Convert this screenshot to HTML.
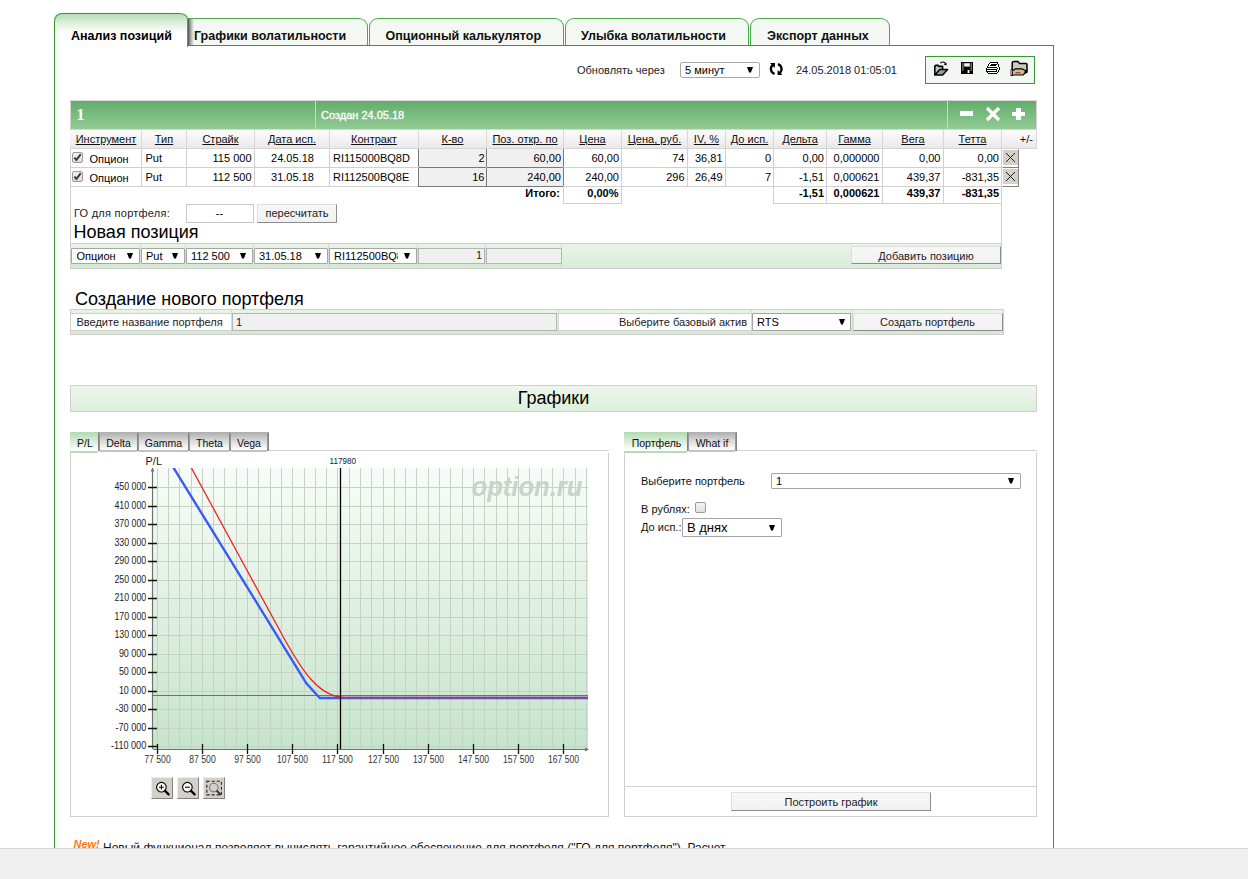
<!DOCTYPE html>
<html><head><meta charset="utf-8"><title>Анализ позиций</title>
<style>
html,body{margin:0;padding:0;background:#fff;}
body{width:1248px;height:879px;overflow:hidden;position:relative;font-family:"Liberation Sans",sans-serif;}
.t{position:absolute;white-space:nowrap;line-height:normal;}
.r{position:absolute;}
</style></head><body>
<div class="r" style="left:187px;top:18px;width:179px;height:27px;border:1px solid #4aa94a;border-bottom:none;border-radius:0 9px 0 0;background:#f3f8f2;"></div>
<div class="t" style="left:194px;top:29px;font: bold 12.5px 'Liberation Sans',sans-serif;color:#111;">Графики волатильности</div>
<div class="r" style="left:369px;top:18px;width:193px;height:27px;border:1px solid #4aa94a;border-bottom:none;border-radius:9px 9px 0 0;background:#f3f8f2;"></div>
<div class="t" style="left:385.5px;top:29px;font: bold 12.5px 'Liberation Sans',sans-serif;color:#111;">Опционный калькулятор</div>
<div class="r" style="left:565px;top:18px;width:182px;height:27px;border:1px solid #4aa94a;border-bottom:none;border-radius:9px 9px 0 0;background:#f3f8f2;"></div>
<div class="t" style="left:581px;top:29px;font: bold 12.5px 'Liberation Sans',sans-serif;color:#111;">Улыбка волатильности</div>
<div class="r" style="left:750px;top:18px;width:138px;height:27px;border:1px solid #4aa94a;border-bottom:none;border-radius:9px 9px 0 0;background:#f3f8f2;"></div>
<div class="t" style="left:767px;top:29px;font: bold 12.5px 'Liberation Sans',sans-serif;color:#111;">Экспорт данных</div>
<div class="r" style="left:54px;top:45px;width:998px;height:900px;border:1px solid #339933;background:#fff;"></div>
<div class="r" style="left:54px;top:13px;width:132px;height:33px;border:1px solid #339933;border-bottom:none;border-radius:8px 8px 0 0 / 8px 6px 0 0;background:linear-gradient(#b3dbb3 0px,#d8eed8 8px,#fff 19px,#fff);"></div>
<div class="r" style="left:187px;top:18px;width:1px;height:27px;background:#4aa94a;"></div>
<div class="r" style="left:188px;top:19px;width:6px;height:26px;background:linear-gradient(90deg,#4a4a4a 0,#9a9a9a 35%,rgba(243,248,242,0) 100%);"></div>
<div class="t" style="left:71px;top:29px;font: bold 12.5px 'Liberation Sans',sans-serif;color:#000;">Анализ позиций</div>
<div class="t" style="left:577px;top:64px;font: normal 11px 'Liberation Sans',sans-serif;color:#222;">Обновлять через</div>
<div class="r" style="left:680px;top:62px;width:78px;height:14px;border:1px solid #a9a9a9;border-radius:2px;background:#fff;"></div>
<div class="t" style="left:685px;top:64px;font: normal 11px 'Liberation Sans',sans-serif;color:#000;">5 минут</div>
<svg class="r" style="left:747px;top:67.3px" width="7" height="7" viewBox="0 0 7 7"><path d="M0 0 H6 L3.9 5.6 H2.1 Z" fill="#000"/></svg>
<svg class="r" style="left:764px;top:58px" width="24" height="22" viewBox="0 0 24 22"><path d="M9.6 6.6 C7.3 8 6.6 10 7 12 C7.4 14 8.8 15.3 10.6 15.9" fill="none" stroke="#000" stroke-width="2.3"/><path d="M6 5.1 L11 5.1 L10.8 9.9 Z" fill="#000"/><path d="M14.9 15.4 C17.2 14 17.9 12 17.5 10 C17.1 8 15.7 6.7 13.9 6.1" fill="none" stroke="#000" stroke-width="2.3"/><path d="M18.5 16.9 L13.5 16.9 L13.7 12.1 Z" fill="#000"/></svg>
<div class="t" style="left:796px;top:64px;font: normal 11px 'Liberation Sans',sans-serif;color:#222;">24.05.2018 01:05:01</div>
<div class="r" style="left:925px;top:56px;width:108px;height:26px;border:1px solid #339933;background:#f3f7f2;"></div>
<svg class="r" style="left:928px;top:58px" width="106" height="24" viewBox="0 0 106 24">
<g stroke="#000" stroke-linejoin="round">
<path d="M6.8 17 V8.6 Q6.8 7.4 8 7.4 H10.4 L11.2 8.4 H14.6 V11.5" fill="#c4c4c8" stroke-width="1.6"/>
<path d="M6.8 17 L11.8 11.6 H19.6 L14.6 17 Z" fill="#9a9a9a" stroke-width="1.5"/>
<path d="M12.3 5.2 Q15 2.6 17.8 5.6" fill="none" stroke-width="1.1"/>
<path d="M15.6 6.6 L18.6 7.6 L18.4 4.4 Z" fill="#000" stroke="none"/>
</g>
<rect x="33" y="4" width="12" height="12" fill="#000"/>
<rect x="34.3" y="5" width="1.2" height="8" fill="#888"/><rect x="42.6" y="5" width="1.2" height="8" fill="#888"/>
<rect x="36.2" y="5.2" width="5.6" height="3.4" fill="#f4f2ea"/>
<rect x="39.6" y="12" width="1.8" height="3" fill="#fff"/>
<g shape-rendering="crispEdges"><rect x="59" y="5" width="10" height="10" fill="#fff"/><rect x="62" y="4" width="8" height="1" fill="#000"/><rect x="61" y="5" width="1" height="1" fill="#000"/><rect x="69" y="5" width="1" height="1" fill="#000"/><rect x="60" y="6" width="1" height="1" fill="#000"/><rect x="63" y="6" width="6" height="1" fill="#000"/><rect x="70" y="6" width="1" height="1" fill="#000"/><rect x="60" y="7" width="1" height="1" fill="#000"/><rect x="62" y="7" width="6" height="1" fill="#000"/><rect x="70" y="7" width="1" height="1" fill="#000"/><rect x="59" y="8" width="1" height="1" fill="#000"/><rect x="70" y="8" width="1" height="1" fill="#000"/><rect x="59" y="9" width="10" height="1" fill="#000"/><rect x="71" y="9" width="1" height="1" fill="#000"/><rect x="58" y="10" width="1" height="1" fill="#000"/><rect x="69" y="10" width="1" height="1" fill="#000"/><rect x="71" y="10" width="1" height="1" fill="#000"/><rect x="58" y="11" width="11" height="1" fill="#000"/><rect x="71" y="11" width="1" height="1" fill="#000"/><rect x="58" y="12" width="1" height="1" fill="#000"/><rect x="68" y="12" width="1" height="1" fill="#000"/><rect x="70" y="12" width="1" height="1" fill="#000"/><rect x="58" y="13" width="11" height="1" fill="#000"/><rect x="70" y="13" width="1" height="1" fill="#000"/><rect x="59" y="14" width="1" height="1" fill="#000"/><rect x="69" y="14" width="1" height="1" fill="#000"/><rect x="60" y="15" width="9" height="1" fill="#000"/></g>
<path d="M84.2 17.4 V5.4 Q84.2 3.6 86 3.6 H90 L91.6 5.6 H98 Q99 5.6 99 6.8 V14 L96 15.5" fill="#c8ccb4" stroke="#000" stroke-width="1.5"/>
<path d="M84 11.8 h2.2 l1 -1 h6.5 q2.2 0.3 3.2 2 l1.5 -0.6 q-1 2.6 -3.3 4.8 h-11 z" fill="#d8b696" stroke="#000" stroke-width="1.2"/>
<path d="M87.6 14.8 h5" stroke="#5a3a20" stroke-width="1"/>
<rect x="83" y="11.6" width="1.6" height="6" fill="#fff" stroke="#000" stroke-width="0.8"/>
</svg>
<div class="r" style="left:70px;top:100px;width:967px;height:1px;background:#d6d6d6;"></div>
<div class="r" style="left:70px;top:101px;width:967px;height:28px;background:linear-gradient(#62ac6c,#92cb94);"></div>
<div class="r" style="left:315px;top:101px;width:1px;height:28px;background:#c7d9c7;"></div>
<div class="r" style="left:70px;top:100px;width:1px;height:29px;background:#d6d0d2;"></div>
<div class="r" style="left:1036px;top:100px;width:1px;height:29px;background:#d6d0d2;"></div>
<div class="r" style="left:947px;top:101px;width:1px;height:28px;background:#c7d9c7;"></div>
<div class="t" style="left:76.5px;top:106px;font: bold 16px 'Liberation Serif',serif;color:#fff;">1</div>
<div class="t" style="left:321px;top:109px;font: normal 11px 'Liberation Sans',sans-serif;color:#fff;-webkit-text-stroke:0.3px #fff;">Создан 24.05.18</div>
<div class="r" style="left:960px;top:111px;width:13px;height:5px;background:#fff;"></div>
<svg class="r" style="left:985px;top:106px" width="16" height="16" viewBox="0 0 16 16"><path d="M2 2 L14 14 M14 2 L2 14" stroke="#fff" stroke-width="3.2"/></svg>
<div class="r" style="left:1012px;top:112px;width:13px;height:4px;background:#fff;"></div>
<div class="r" style="left:1016px;top:108px;width:5px;height:12px;background:#fff;"></div>
<div class="r" style="left:70px;top:129px;width:967px;height:19px;background:linear-gradient(#fdfdfd,#e9e9e9);border-bottom:1px solid #d4d4d4;"></div>
<div class="r" style="left:70px;top:129px;width:967px;height:1px;background:#ddd6d9;"></div>
<div class="r" style="left:141px;top:129px;width:1px;height:19px;background:#d8d8d8;"></div>
<div class="r" style="left:186px;top:129px;width:1px;height:19px;background:#d8d8d8;"></div>
<div class="r" style="left:254px;top:129px;width:1px;height:19px;background:#d8d8d8;"></div>
<div class="r" style="left:329px;top:129px;width:1px;height:19px;background:#d8d8d8;"></div>
<div class="r" style="left:418px;top:129px;width:1px;height:19px;background:#d8d8d8;"></div>
<div class="r" style="left:486px;top:129px;width:1px;height:19px;background:#d8d8d8;"></div>
<div class="r" style="left:563px;top:129px;width:1px;height:19px;background:#d8d8d8;"></div>
<div class="r" style="left:621px;top:129px;width:1px;height:19px;background:#d8d8d8;"></div>
<div class="r" style="left:687px;top:129px;width:1px;height:19px;background:#d8d8d8;"></div>
<div class="r" style="left:725px;top:129px;width:1px;height:19px;background:#d8d8d8;"></div>
<div class="r" style="left:773px;top:129px;width:1px;height:19px;background:#d8d8d8;"></div>
<div class="r" style="left:826px;top:129px;width:1px;height:19px;background:#d8d8d8;"></div>
<div class="r" style="left:882px;top:129px;width:1px;height:19px;background:#d8d8d8;"></div>
<div class="r" style="left:943px;top:129px;width:1px;height:19px;background:#d8d8d8;"></div>
<div class="r" style="left:1001px;top:129px;width:1px;height:19px;background:#d8d8d8;"></div>
<div class="r" style="left:1036px;top:129px;width:1px;height:19px;background:#d8d8d8;"></div>
<div class="t" style="left:-94.0px;width:400px;top:133px;font: normal 11px 'Liberation Sans',sans-serif;color:#111;text-align:center;text-decoration:underline;">Инструмент</div>
<div class="t" style="left:-36.0px;width:400px;top:133px;font: normal 11px 'Liberation Sans',sans-serif;color:#111;text-align:center;text-decoration:underline;">Тип</div>
<div class="t" style="left:20.5px;width:400px;top:133px;font: normal 11px 'Liberation Sans',sans-serif;color:#111;text-align:center;text-decoration:underline;">Страйк</div>
<div class="t" style="left:92.0px;width:400px;top:133px;font: normal 11px 'Liberation Sans',sans-serif;color:#111;text-align:center;text-decoration:underline;">Дата исп.</div>
<div class="t" style="left:174.0px;width:400px;top:133px;font: normal 11px 'Liberation Sans',sans-serif;color:#111;text-align:center;text-decoration:underline;">Контракт</div>
<div class="t" style="left:252.5px;width:400px;top:133px;font: normal 11px 'Liberation Sans',sans-serif;color:#111;text-align:center;text-decoration:underline;">К-во</div>
<div class="t" style="left:325.0px;width:400px;top:133px;font: normal 11px 'Liberation Sans',sans-serif;color:#111;text-align:center;text-decoration:underline;">Поз. откр. по</div>
<div class="t" style="left:392.5px;width:400px;top:133px;font: normal 11px 'Liberation Sans',sans-serif;color:#111;text-align:center;text-decoration:underline;">Цена</div>
<div class="t" style="left:454.5px;width:400px;top:133px;font: normal 11px 'Liberation Sans',sans-serif;color:#111;text-align:center;text-decoration:underline;">Цена, руб.</div>
<div class="t" style="left:506.5px;width:400px;top:133px;font: normal 11px 'Liberation Sans',sans-serif;color:#111;text-align:center;text-decoration:underline;">IV, %</div>
<div class="t" style="left:549.5px;width:400px;top:133px;font: normal 11px 'Liberation Sans',sans-serif;color:#111;text-align:center;text-decoration:underline;">До исп.</div>
<div class="t" style="left:600.0px;width:400px;top:133px;font: normal 11px 'Liberation Sans',sans-serif;color:#111;text-align:center;text-decoration:underline;">Дельта</div>
<div class="t" style="left:654.5px;width:400px;top:133px;font: normal 11px 'Liberation Sans',sans-serif;color:#111;text-align:center;text-decoration:underline;">Гамма</div>
<div class="t" style="left:713.0px;width:400px;top:133px;font: normal 11px 'Liberation Sans',sans-serif;color:#111;text-align:center;text-decoration:underline;">Вега</div>
<div class="t" style="left:772.5px;width:400px;top:133px;font: normal 11px 'Liberation Sans',sans-serif;color:#111;text-align:center;text-decoration:underline;">Тетта</div>
<div class="t" style="right:215px;top:133px;font: normal 11px 'Liberation Sans',sans-serif;color:#111;text-align:right;">+/-</div>
<div class="r" style="left:70px;top:148px;width:1px;height:120px;background:#d0d0d0;"></div>
<div class="r" style="left:70px;top:167px;width:931px;height:1px;background:#d0d0d0;"></div>
<div class="r" style="left:141px;top:148px;width:1px;height:19px;background:#d0d0d0;"></div>
<div class="r" style="left:186px;top:148px;width:1px;height:19px;background:#d0d0d0;"></div>
<div class="r" style="left:254px;top:148px;width:1px;height:19px;background:#d0d0d0;"></div>
<div class="r" style="left:329px;top:148px;width:1px;height:19px;background:#d0d0d0;"></div>
<div class="r" style="left:418px;top:148px;width:1px;height:19px;background:#d0d0d0;"></div>
<div class="r" style="left:486px;top:148px;width:1px;height:19px;background:#d0d0d0;"></div>
<div class="r" style="left:563px;top:148px;width:1px;height:19px;background:#d0d0d0;"></div>
<div class="r" style="left:621px;top:148px;width:1px;height:19px;background:#d0d0d0;"></div>
<div class="r" style="left:687px;top:148px;width:1px;height:19px;background:#d0d0d0;"></div>
<div class="r" style="left:725px;top:148px;width:1px;height:19px;background:#d0d0d0;"></div>
<div class="r" style="left:773px;top:148px;width:1px;height:19px;background:#d0d0d0;"></div>
<div class="r" style="left:826px;top:148px;width:1px;height:19px;background:#d0d0d0;"></div>
<div class="r" style="left:882px;top:148px;width:1px;height:19px;background:#d0d0d0;"></div>
<div class="r" style="left:943px;top:148px;width:1px;height:19px;background:#d0d0d0;"></div>
<div class="r" style="left:1001px;top:148px;width:1px;height:19px;background:#d0d0d0;"></div>
<div class="r" style="left:419px;top:149px;width:144px;height:18px;background:#f0f0f0;"></div>
<div class="r" style="left:418px;top:149px;width:1px;height:19px;background:#7a7a7a;"></div>
<div class="r" style="left:486px;top:149px;width:1px;height:19px;background:#7a7a7a;"></div>
<div class="r" style="left:563px;top:149px;width:1px;height:19px;background:#7a7a7a;"></div>
<div class="r" style="left:418px;top:167px;width:146px;height:1px;background:#7a7a7a;"></div>
<div class="r" style="left:72px;top:152px;width:11px;height:11px;border:1px solid #9a9a9a;border-radius:2px;background:linear-gradient(#f2f2f2,#dcdcdc);box-sizing:border-box;"></div>
<svg class="r" style="left:72px;top:152px" width="11" height="11" viewBox="0 0 11 11"><path d="M2.4 5.6 L4.4 8 L8.8 2.2" fill="none" stroke="#3a3a3a" stroke-width="2"/></svg>
<div class="t" style="left:89.5px;top:153px;font: normal 11px 'Liberation Sans',sans-serif;color:#000;">Опцион</div>
<div class="t" style="left:145.5px;top:152px;font: normal 11px 'Liberation Sans',sans-serif;color:#000;">Put</div>
<div class="t" style="right:996.5px;top:152px;font: normal 11px 'Liberation Sans',sans-serif;color:#000;text-align:right;">115 000</div>
<div class="t" style="left:92.5px;width:400px;top:152px;font: normal 11px 'Liberation Sans',sans-serif;color:#000;text-align:center;">24.05.18</div>
<div class="t" style="left:333px;top:152px;font: normal 11px 'Liberation Sans',sans-serif;color:#000;">RI115000BQ8D</div>
<div class="t" style="right:763.5px;top:152px;font: normal 11px 'Liberation Sans',sans-serif;color:#000;text-align:right;">2</div>
<div class="t" style="right:687px;top:152px;font: normal 11px 'Liberation Sans',sans-serif;color:#000;text-align:right;">60,00</div>
<div class="t" style="right:629px;top:152px;font: normal 11px 'Liberation Sans',sans-serif;color:#000;text-align:right;">60,00</div>
<div class="t" style="right:563.5px;top:152px;font: normal 11px 'Liberation Sans',sans-serif;color:#000;text-align:right;">74</div>
<div class="t" style="right:525.5px;top:152px;font: normal 11px 'Liberation Sans',sans-serif;color:#000;text-align:right;">36,81</div>
<div class="t" style="right:477px;top:152px;font: normal 11px 'Liberation Sans',sans-serif;color:#000;text-align:right;">0</div>
<div class="t" style="right:424px;top:152px;font: normal 11px 'Liberation Sans',sans-serif;color:#000;text-align:right;">0,00</div>
<div class="t" style="right:368.5px;top:152px;font: normal 11px 'Liberation Sans',sans-serif;color:#000;text-align:right;">0,000000</div>
<div class="t" style="right:307.5px;top:152px;font: normal 11px 'Liberation Sans',sans-serif;color:#000;text-align:right;">0,00</div>
<div class="t" style="right:249px;top:152px;font: normal 11px 'Liberation Sans',sans-serif;color:#000;text-align:right;">0,00</div>
<div class="r" style="left:1002px;top:149px;width:17px;height:19px;background:#d4d0c8;border:1px solid;border-color:#fff #808080 #808080 #fff;box-shadow:inset 0 -2px 0 #fff;box-sizing:border-box;"></div>
<svg class="r" style="left:1005px;top:152px" width="11" height="11" viewBox="0 0 11 11"><path d="M1 1 L10 10 M10 1 L1 10" stroke="#222" stroke-width="1"/></svg>
<div class="r" style="left:70px;top:186px;width:931px;height:1px;background:#d0d0d0;"></div>
<div class="r" style="left:141px;top:167px;width:1px;height:19px;background:#d0d0d0;"></div>
<div class="r" style="left:186px;top:167px;width:1px;height:19px;background:#d0d0d0;"></div>
<div class="r" style="left:254px;top:167px;width:1px;height:19px;background:#d0d0d0;"></div>
<div class="r" style="left:329px;top:167px;width:1px;height:19px;background:#d0d0d0;"></div>
<div class="r" style="left:418px;top:167px;width:1px;height:19px;background:#d0d0d0;"></div>
<div class="r" style="left:486px;top:167px;width:1px;height:19px;background:#d0d0d0;"></div>
<div class="r" style="left:563px;top:167px;width:1px;height:19px;background:#d0d0d0;"></div>
<div class="r" style="left:621px;top:167px;width:1px;height:19px;background:#d0d0d0;"></div>
<div class="r" style="left:687px;top:167px;width:1px;height:19px;background:#d0d0d0;"></div>
<div class="r" style="left:725px;top:167px;width:1px;height:19px;background:#d0d0d0;"></div>
<div class="r" style="left:773px;top:167px;width:1px;height:19px;background:#d0d0d0;"></div>
<div class="r" style="left:826px;top:167px;width:1px;height:19px;background:#d0d0d0;"></div>
<div class="r" style="left:882px;top:167px;width:1px;height:19px;background:#d0d0d0;"></div>
<div class="r" style="left:943px;top:167px;width:1px;height:19px;background:#d0d0d0;"></div>
<div class="r" style="left:1001px;top:167px;width:1px;height:19px;background:#d0d0d0;"></div>
<div class="r" style="left:419px;top:168px;width:144px;height:18px;background:#f0f0f0;"></div>
<div class="r" style="left:418px;top:168px;width:1px;height:19px;background:#7a7a7a;"></div>
<div class="r" style="left:486px;top:168px;width:1px;height:19px;background:#7a7a7a;"></div>
<div class="r" style="left:563px;top:168px;width:1px;height:19px;background:#7a7a7a;"></div>
<div class="r" style="left:418px;top:186px;width:146px;height:1px;background:#7a7a7a;"></div>
<div class="r" style="left:72px;top:171px;width:11px;height:11px;border:1px solid #9a9a9a;border-radius:2px;background:linear-gradient(#f2f2f2,#dcdcdc);box-sizing:border-box;"></div>
<svg class="r" style="left:72px;top:171px" width="11" height="11" viewBox="0 0 11 11"><path d="M2.4 5.6 L4.4 8 L8.8 2.2" fill="none" stroke="#3a3a3a" stroke-width="2"/></svg>
<div class="t" style="left:89.5px;top:172px;font: normal 11px 'Liberation Sans',sans-serif;color:#000;">Опцион</div>
<div class="t" style="left:145.5px;top:171px;font: normal 11px 'Liberation Sans',sans-serif;color:#000;">Put</div>
<div class="t" style="right:996.5px;top:171px;font: normal 11px 'Liberation Sans',sans-serif;color:#000;text-align:right;">112 500</div>
<div class="t" style="left:92.5px;width:400px;top:171px;font: normal 11px 'Liberation Sans',sans-serif;color:#000;text-align:center;">31.05.18</div>
<div class="t" style="left:333px;top:171px;font: normal 11px 'Liberation Sans',sans-serif;color:#000;">RI112500BQ8E</div>
<div class="t" style="right:763.5px;top:171px;font: normal 11px 'Liberation Sans',sans-serif;color:#000;text-align:right;">16</div>
<div class="t" style="right:687px;top:171px;font: normal 11px 'Liberation Sans',sans-serif;color:#000;text-align:right;">240,00</div>
<div class="t" style="right:629px;top:171px;font: normal 11px 'Liberation Sans',sans-serif;color:#000;text-align:right;">240,00</div>
<div class="t" style="right:563.5px;top:171px;font: normal 11px 'Liberation Sans',sans-serif;color:#000;text-align:right;">296</div>
<div class="t" style="right:525.5px;top:171px;font: normal 11px 'Liberation Sans',sans-serif;color:#000;text-align:right;">26,49</div>
<div class="t" style="right:477px;top:171px;font: normal 11px 'Liberation Sans',sans-serif;color:#000;text-align:right;">7</div>
<div class="t" style="right:424px;top:171px;font: normal 11px 'Liberation Sans',sans-serif;color:#000;text-align:right;">-1,51</div>
<div class="t" style="right:368.5px;top:171px;font: normal 11px 'Liberation Sans',sans-serif;color:#000;text-align:right;">0,000621</div>
<div class="t" style="right:307.5px;top:171px;font: normal 11px 'Liberation Sans',sans-serif;color:#000;text-align:right;">439,37</div>
<div class="t" style="right:249px;top:171px;font: normal 11px 'Liberation Sans',sans-serif;color:#000;text-align:right;">-831,35</div>
<div class="r" style="left:1002px;top:168px;width:17px;height:19px;background:#d4d0c8;border:1px solid;border-color:#fff #808080 #808080 #fff;box-shadow:inset 0 -2px 0 #fff;box-sizing:border-box;"></div>
<svg class="r" style="left:1005px;top:171px" width="11" height="11" viewBox="0 0 11 11"><path d="M1 1 L10 10 M10 1 L1 10" stroke="#222" stroke-width="1"/></svg>
<div class="r" style="left:563px;top:186px;width:1px;height:17px;background:#d0d0d0;"></div>
<div class="r" style="left:621px;top:186px;width:1px;height:17px;background:#d0d0d0;"></div>
<div class="r" style="left:563px;top:203px;width:59px;height:1px;background:#d0d0d0;"></div>
<div class="r" style="left:773px;top:186px;width:1px;height:17px;background:#d0d0d0;"></div>
<div class="r" style="left:826px;top:186px;width:1px;height:17px;background:#d0d0d0;"></div>
<div class="r" style="left:882px;top:186px;width:1px;height:17px;background:#d0d0d0;"></div>
<div class="r" style="left:943px;top:186px;width:1px;height:17px;background:#d0d0d0;"></div>
<div class="r" style="left:1001px;top:186px;width:1px;height:17px;background:#d0d0d0;"></div>
<div class="r" style="left:773px;top:203px;width:229px;height:1px;background:#d0d0d0;"></div>
<div class="r" style="left:1001px;top:203px;width:1px;height:65px;background:#d0d0d0;"></div>
<div class="t" style="right:688px;top:187px;font: bold 11px 'Liberation Sans',sans-serif;color:#000;text-align:right;">Итого:</div>
<div class="t" style="right:629.5px;top:187px;font: bold 11px 'Liberation Sans',sans-serif;color:#000;text-align:right;">0,00%</div>
<div class="t" style="right:424px;top:187px;font: bold 11px 'Liberation Sans',sans-serif;color:#000;text-align:right;">-1,51</div>
<div class="t" style="right:368.5px;top:187px;font: bold 11px 'Liberation Sans',sans-serif;color:#000;text-align:right;">0,000621</div>
<div class="t" style="right:307.5px;top:187px;font: bold 11px 'Liberation Sans',sans-serif;color:#000;text-align:right;">439,37</div>
<div class="t" style="right:249px;top:187px;font: bold 11px 'Liberation Sans',sans-serif;color:#000;text-align:right;">-831,35</div>
<div class="t" style="left:74px;top:207px;font: normal 11px 'Liberation Sans',sans-serif;color:#222;letter-spacing:0.25px;">ГО для портфеля:</div>
<div class="r" style="left:186px;top:204px;width:66px;height:17px;border:1px solid #c8c8c8;background:#fff;"></div>
<div class="t" style="left:19.5px;width:400px;top:207px;font: normal 11px 'Liberation Sans',sans-serif;color:#000;text-align:center;">--</div>
<div class="r" style="left:257px;top:204px;width:80px;height:19px;border:1px solid #dedede;border-right-color:#8c8c8c;border-bottom-color:#8c8c8c;background:linear-gradient(#f7f7f7,#f1f1f1);box-sizing:border-box;"></div>
<div class="t" style="left:97px;width:400px;top:207px;font: normal 11px 'Liberation Sans',sans-serif;color:#222;text-align:center;">пересчитать</div>
<div class="t" style="left:73.5px;top:222px;font: normal 18px 'Liberation Sans',sans-serif;color:#000;">Новая позиция</div>
<div class="r" style="left:70px;top:243px;width:932px;height:26px;background:linear-gradient(#e9f4e7,#d4e9d2);border-top:1px solid #cfcfcf;border-bottom:1px solid #cfcfcf;box-sizing:border-box;"></div>
<div class="r" style="left:562px;top:244px;width:439px;height:24px;background:linear-gradient(#e9f4e8,#d9ecd9);"></div>
<div class="r" style="left:70px;top:243px;width:1px;height:26px;background:#cfcfcf;"></div>
<div class="r" style="left:1001px;top:243px;width:1px;height:26px;background:#cfcfcf;"></div>
<div class="r" style="left:140px;top:244px;width:1px;height:24px;background:#d2dcd2;"></div>
<div class="r" style="left:185px;top:244px;width:1px;height:24px;background:#d2dcd2;"></div>
<div class="r" style="left:253px;top:244px;width:1px;height:24px;background:#d2dcd2;"></div>
<div class="r" style="left:328px;top:244px;width:1px;height:24px;background:#d2dcd2;"></div>
<div class="r" style="left:417px;top:244px;width:1px;height:24px;background:#d2dcd2;"></div>
<div class="r" style="left:485px;top:244px;width:1px;height:24px;background:#d2dcd2;"></div>
<div class="r" style="left:561px;top:244px;width:1px;height:24px;background:#d2dcd2;"></div>
<div class="r" style="left:71px;top:248px;width:69px;height:16px;border:1px solid #a6a6a6;background:#fff;box-sizing:border-box;border-radius:1px;"></div>
<div class="t" style="left:76.5px;top:250px;font: normal 11px 'Liberation Sans',sans-serif;color:#000;">Опцион</div>
<svg class="r" style="left:127px;top:253px" width="7" height="7" viewBox="0 0 7 7"><path d="M0 0 H6 L3.9 5.6 H2.1 Z" fill="#000"/></svg>
<div class="r" style="left:141px;top:248px;width:44px;height:16px;border:1px solid #a6a6a6;background:#fff;box-sizing:border-box;border-radius:1px;"></div>
<div class="t" style="left:146px;top:250px;font: normal 11px 'Liberation Sans',sans-serif;color:#000;">Put</div>
<svg class="r" style="left:172px;top:253px" width="7" height="7" viewBox="0 0 7 7"><path d="M0 0 H6 L3.9 5.6 H2.1 Z" fill="#000"/></svg>
<div class="r" style="left:186px;top:248px;width:67px;height:16px;border:1px solid #a6a6a6;background:#fff;box-sizing:border-box;border-radius:1px;"></div>
<div class="t" style="left:191px;top:250px;font: normal 11px 'Liberation Sans',sans-serif;color:#000;">112 500</div>
<svg class="r" style="left:240px;top:253px" width="7" height="7" viewBox="0 0 7 7"><path d="M0 0 H6 L3.9 5.6 H2.1 Z" fill="#000"/></svg>
<div class="r" style="left:254px;top:248px;width:74px;height:16px;border:1px solid #a6a6a6;background:#fff;box-sizing:border-box;border-radius:1px;"></div>
<div class="t" style="left:259px;top:250px;font: normal 11px 'Liberation Sans',sans-serif;color:#000;">31.05.18</div>
<svg class="r" style="left:315px;top:253px" width="7" height="7" viewBox="0 0 7 7"><path d="M0 0 H6 L3.9 5.6 H2.1 Z" fill="#000"/></svg>
<div class="r" style="left:329px;top:248px;width:88px;height:16px;overflow:hidden;border:1px solid #a6a6a6;box-sizing:border-box;background:#fff;"></div>
<div class="t" style="left:334px;top:250px;width:64px;overflow:hidden;font:11px 'Liberation Sans';white-space:nowrap">RI112500BQ8E</div>
<svg class="r" style="left:404px;top:252.6px" width="7" height="7" viewBox="0 0 7 7"><path d="M0 0 H6 L3.9 5.6 H2.1 Z" fill="#000"/></svg>
<div class="r" style="left:418px;top:248px;width:67px;height:16px;border:1px solid #b5b5b5;background:#f0f0f0;box-sizing:border-box;"></div>
<div class="t" style="right:766px;top:249px;font: normal 11px 'Liberation Sans',sans-serif;color:#222;text-align:right;">1</div>
<div class="r" style="left:486px;top:248px;width:76px;height:16px;border:1px solid #b5b5b5;background:#f0f0f0;box-sizing:border-box;"></div>
<div class="r" style="left:851px;top:246px;width:150px;height:18px;border:1px solid #dedede;border-right-color:#8c8c8c;border-bottom-color:#8c8c8c;background:linear-gradient(#f7f7f7,#f1f1f1);box-sizing:border-box;"></div>
<div class="t" style="left:726px;width:400px;top:249.5px;font: normal 11px 'Liberation Sans',sans-serif;color:#222;text-align:center;">Добавить позицию</div>
<div class="t" style="left:75px;top:289px;font: normal 18px 'Liberation Sans',sans-serif;color:#000;">Создание нового портфеля</div>
<div class="r" style="left:70px;top:309px;width:934px;height:26px;background:linear-gradient(#e9f4e7,#d4e9d2);border-top:1px solid #cfcfcf;border-bottom:1px solid #cfcfcf;box-sizing:border-box;"></div>
<div class="r" style="left:70px;top:309px;width:1px;height:26px;background:#cfcfcf;"></div>
<div class="r" style="left:1003px;top:309px;width:1px;height:26px;background:#cfcfcf;"></div>
<div class="r" style="left:71px;top:313px;width:931px;height:1px;background:#d0d0d0;"></div>
<div class="r" style="left:71px;top:330px;width:931px;height:1px;background:#d0d0d0;"></div>
<div class="r" style="left:71px;top:314px;width:160px;height:16px;background:#fff;"></div>
<div class="r" style="left:231px;top:310px;width:1px;height:24px;background:#d2dcd2;"></div>
<div class="r" style="left:232px;top:313px;width:325px;height:18px;background:#f0f0f0;border:1px solid #b5b5b5;box-sizing:border-box;"></div>
<div class="r" style="left:558px;top:310px;width:1px;height:24px;background:#d2dcd2;"></div>
<div class="r" style="left:559px;top:314px;width:192px;height:16px;background:#fff;"></div>
<div class="r" style="left:751px;top:310px;width:1px;height:24px;background:#d2dcd2;"></div>
<div class="r" style="left:852px;top:310px;width:1px;height:24px;background:#d2dcd2;"></div>
<div class="t" style="left:76.5px;top:316px;font: normal 11px 'Liberation Sans',sans-serif;color:#222;">Введите название портфеля</div>
<div class="t" style="left:236px;top:316px;font: normal 11px 'Liberation Sans',sans-serif;color:#222;">1</div>
<div class="t" style="right:501px;top:316px;font: normal 11px 'Liberation Sans',sans-serif;color:#222;text-align:right;">Выберите базовый актив</div>
<div class="r" style="left:752px;top:313px;width:99px;height:18px;border:1px solid #a6a6a6;background:#fff;box-sizing:border-box;border-radius:1px;"></div>
<div class="t" style="left:757px;top:316px;font: normal 11px 'Liberation Sans',sans-serif;color:#000;">RTS</div>
<svg class="r" style="left:839px;top:319px" width="7" height="7" viewBox="0 0 7 7"><path d="M0 0 H6 L3.9 5.6 H2.1 Z" fill="#000"/></svg>
<div class="r" style="left:853px;top:313px;width:150px;height:18px;border:1px solid #dedede;border-right-color:#8c8c8c;border-bottom-color:#8c8c8c;background:linear-gradient(#f7f7f7,#f1f1f1);box-sizing:border-box;"></div>
<div class="t" style="left:727.5px;width:400px;top:316px;font: normal 11px 'Liberation Sans',sans-serif;color:#222;text-align:center;">Создать портфель</div>
<div class="r" style="left:70px;top:385px;width:967px;height:27px;border:1px solid #cfcfcf;background:linear-gradient(#eef6ee,#dcefdc);box-sizing:border-box;"></div>
<div class="t" style="left:353.5px;width:400px;top:388px;font: normal 18px 'Liberation Sans',sans-serif;color:#000;text-align:center;">Графики</div>
<div class="r" style="left:269px;top:450px;width:340px;height:1px;background:#d0d0d0;"></div>
<div class="r" style="left:70px;top:432px;width:28px;height:19px;background:linear-gradient(#b2dab2,#f4faf4 85%,#fff);"></div>
<div class="r" style="left:70px;top:451px;width:28px;height:2px;background:#b5dcb5;"></div>
<div class="t" style="left:-115.0px;width:400px;top:437px;font: normal 10.5px 'Liberation Sans',sans-serif;color:#111;text-align:center;">P/L</div>
<div class="r" style="left:98px;top:432px;width:2px;height:19px;background:linear-gradient(90deg,#7a7a7a,#a0a0a0);border-radius:1px 1px 0 0;"></div>
<div class="r" style="left:100px;top:432px;width:37px;height:18px;background:linear-gradient(#adadad,#d6d6d6 45%,#fbfbfb 95%);"></div>
<div class="r" style="left:100px;top:450px;width:37px;height:2px;background:#c2c2c2;"></div>
<div class="t" style="left:-81.5px;width:400px;top:437px;font: normal 10.5px 'Liberation Sans',sans-serif;color:#111;text-align:center;">Delta</div>
<div class="r" style="left:137px;top:432px;width:2px;height:19px;background:linear-gradient(90deg,#7a7a7a,#a0a0a0);border-radius:1px 1px 0 0;"></div>
<div class="r" style="left:139px;top:432px;width:49px;height:18px;background:linear-gradient(#adadad,#d6d6d6 45%,#fbfbfb 95%);"></div>
<div class="r" style="left:139px;top:450px;width:49px;height:2px;background:#c2c2c2;"></div>
<div class="t" style="left:-36.5px;width:400px;top:437px;font: normal 10.5px 'Liberation Sans',sans-serif;color:#111;text-align:center;">Gamma</div>
<div class="r" style="left:188px;top:432px;width:2px;height:19px;background:linear-gradient(90deg,#7a7a7a,#a0a0a0);border-radius:1px 1px 0 0;"></div>
<div class="r" style="left:190px;top:432px;width:39px;height:18px;background:linear-gradient(#adadad,#d6d6d6 45%,#fbfbfb 95%);"></div>
<div class="r" style="left:190px;top:450px;width:39px;height:2px;background:#c2c2c2;"></div>
<div class="t" style="left:9.5px;width:400px;top:437px;font: normal 10.5px 'Liberation Sans',sans-serif;color:#111;text-align:center;">Theta</div>
<div class="r" style="left:229px;top:432px;width:2px;height:19px;background:linear-gradient(90deg,#7a7a7a,#a0a0a0);border-radius:1px 1px 0 0;"></div>
<div class="r" style="left:231px;top:432px;width:36px;height:18px;background:linear-gradient(#adadad,#d6d6d6 45%,#fbfbfb 95%);"></div>
<div class="r" style="left:231px;top:450px;width:36px;height:2px;background:#c2c2c2;"></div>
<div class="r" style="left:267px;top:432px;width:2px;height:19px;background:linear-gradient(90deg,#a0a0a0,#7a7a7a);border-radius:1px 1px 0 0;"></div>
<div class="t" style="left:49.0px;width:400px;top:437px;font: normal 10.5px 'Liberation Sans',sans-serif;color:#111;text-align:center;">Vega</div>
<div class="r" style="left:70px;top:453px;width:1px;height:364px;background:#cfcfcf;"></div>
<div class="r" style="left:608px;top:453px;width:1px;height:364px;background:#cfcfcf;"></div>
<div class="r" style="left:70px;top:816px;width:539px;height:1px;background:#cfcfcf;"></div>
<div class="r" style="left:737px;top:450px;width:300px;height:1px;background:#d0d0d0;"></div>
<div class="r" style="left:624px;top:432px;width:63px;height:19px;background:linear-gradient(#b2dab2,#f4faf4 85%,#fff);"></div>
<div class="r" style="left:624px;top:451px;width:63px;height:2px;background:#b5dcb5;"></div>
<div class="t" style="left:456.5px;width:400px;top:437px;font: normal 10.5px 'Liberation Sans',sans-serif;color:#111;text-align:center;">Портфель</div>
<div class="r" style="left:687px;top:432px;width:2px;height:19px;background:linear-gradient(90deg,#7a7a7a,#a0a0a0);border-radius:1px 1px 0 0;"></div>
<div class="r" style="left:689px;top:432px;width:46px;height:18px;background:linear-gradient(#adadad,#d6d6d6 45%,#fbfbfb 95%);"></div>
<div class="r" style="left:689px;top:450px;width:46px;height:2px;background:#c2c2c2;"></div>
<div class="r" style="left:735px;top:432px;width:2px;height:19px;background:linear-gradient(90deg,#a0a0a0,#7a7a7a);border-radius:1px 1px 0 0;"></div>
<div class="t" style="left:512.0px;width:400px;top:437px;font: normal 10.5px 'Liberation Sans',sans-serif;color:#111;text-align:center;">What if</div>
<div class="r" style="left:624px;top:453px;width:1px;height:364px;background:#cfcfcf;"></div>
<div class="r" style="left:1036px;top:453px;width:1px;height:364px;background:#cfcfcf;"></div>
<div class="r" style="left:624px;top:816px;width:413px;height:1px;background:#cfcfcf;"></div>
<div class="r" style="left:625px;top:786px;width:411px;height:1px;background:#d0d0d0;"></div>
<div class="t" style="left:641px;top:475px;font: normal 11px 'Liberation Sans',sans-serif;color:#111;">Выберите портфель</div>
<div class="r" style="left:771px;top:473px;width:250px;height:16px;border:1px solid #a6a6a6;background:#fff;box-sizing:border-box;border-radius:1px;"></div>
<div class="t" style="left:776px;top:475px;font: normal 11px 'Liberation Sans',sans-serif;color:#000;">1</div>
<svg class="r" style="left:1008px;top:478px" width="7" height="7" viewBox="0 0 7 7"><path d="M0 0 H6 L3.9 5.6 H2.1 Z" fill="#000"/></svg>
<div class="t" style="left:641px;top:502.5px;font: normal 11px 'Liberation Sans',sans-serif;color:#111;">В рублях:</div>
<div class="r" style="left:695px;top:502px;width:11px;height:11px;border:1px solid #9a9a9a;border-radius:2px;background:linear-gradient(#f6f6f6,#e0e0e0);box-sizing:border-box;"></div>
<div class="t" style="left:641px;top:521px;font: normal 11px 'Liberation Sans',sans-serif;color:#111;">До исп.:</div>
<div class="r" style="left:682px;top:518px;width:100px;height:19px;border:1px solid #a6a6a6;background:#fff;box-sizing:border-box;border-radius:1px;"></div>
<div class="t" style="left:687px;top:520px;font: normal 13px 'Liberation Sans',sans-serif;color:#000;">В днях</div>
<svg class="r" style="left:769px;top:525px" width="7" height="7" viewBox="0 0 7 7"><path d="M0 0 H6 L3.9 5.6 H2.1 Z" fill="#000"/></svg>
<div class="r" style="left:731px;top:792px;width:200px;height:19px;border:1px solid #dedede;border-right-color:#8c8c8c;border-bottom-color:#8c8c8c;background:linear-gradient(#f7f7f7,#f1f1f1);box-sizing:border-box;"></div>
<div class="t" style="left:631px;width:400px;top:795.5px;font: normal 11px 'Liberation Sans',sans-serif;color:#222;text-align:center;">Построить график</div>
<svg class="r" style="left:0;top:0" width="620" height="780" viewBox="0 0 620 780"><defs><linearGradient id="pg" x1="0" y1="0" x2="0" y2="1"><stop offset="0" stop-color="#f8fcf8"/><stop offset="1" stop-color="#c6e4cc"/></linearGradient><clipPath id="cp"><rect x="153" y="468" width="435" height="281"/></clipPath></defs><rect x="153" y="468" width="435" height="281" fill="url(#pg)"/><path d="M157.5 468V749M168.5 468V749M179.5 468V749M191.5 468V749M202.5 468V749M213.5 468V749M224.5 468V749M236.5 468V749M247.5 468V749M258.5 468V749M270.5 468V749M281.5 468V749M292.5 468V749M304.5 468V749M315.5 468V749M326.5 468V749M337.5 468V749M349.5 468V749M360.5 468V749M371.5 468V749M383.5 468V749M394.5 468V749M405.5 468V749M416.5 468V749M428.5 468V749M439.5 468V749M450.5 468V749M462.5 468V749M473.5 468V749M484.5 468V749M496.5 468V749M507.5 468V749M518.5 468V749M529.5 468V749M541.5 468V749M552.5 468V749M563.5 468V749M575.5 468V749M586.5 468V749M153 487.5H588M153 506.5H588M153 524.5H588M153 543.5H588M153 561.5H588M153 580.5H588M153 598.5H588M153 617.5H588M153 635.5H588M153 654.5H588M153 672.5H588M153 691.5H588M153 709.5H588M153 728.5H588M153 746.5H588" stroke="#c5d3c5" stroke-width="1" fill="none"/><text x="582.5" y="495.5" text-anchor="end" font-family="Liberation Sans" font-weight="bold" font-style="italic" font-size="27" textLength="111" lengthAdjust="spacingAndGlyphs" fill="#c9d4c9">option.ru</text><path d="M153 695.5H588" stroke="#6a766a" stroke-width="1"/><path d="M152.5 749V468" stroke="#6a766a" stroke-width="1.2"/><path d="M150.6 471.5 L152.5 467.5 L154.4 471.5 Z" fill="#6a766a"/><path d="M153 749.5H588" stroke="#6a766a" stroke-width="1.2"/><path d="M585 747.6 L589 749.5 L585 751.4 Z" fill="#6a766a"/><text x="146.2" y="490.2" text-anchor="end" font-family="Liberation Sans" font-size="10" textLength="31.8" lengthAdjust="spacingAndGlyphs" fill="#222">450 000</text><text x="146.2" y="509.2" text-anchor="end" font-family="Liberation Sans" font-size="10" textLength="31.8" lengthAdjust="spacingAndGlyphs" fill="#222">410 000</text><text x="146.2" y="527.2" text-anchor="end" font-family="Liberation Sans" font-size="10" textLength="31.8" lengthAdjust="spacingAndGlyphs" fill="#222">370 000</text><text x="146.2" y="546.2" text-anchor="end" font-family="Liberation Sans" font-size="10" textLength="31.8" lengthAdjust="spacingAndGlyphs" fill="#222">330 000</text><text x="146.2" y="564.2" text-anchor="end" font-family="Liberation Sans" font-size="10" textLength="31.8" lengthAdjust="spacingAndGlyphs" fill="#222">290 000</text><text x="146.2" y="583.2" text-anchor="end" font-family="Liberation Sans" font-size="10" textLength="31.8" lengthAdjust="spacingAndGlyphs" fill="#222">250 000</text><text x="146.2" y="601.2" text-anchor="end" font-family="Liberation Sans" font-size="10" textLength="31.8" lengthAdjust="spacingAndGlyphs" fill="#222">210 000</text><text x="146.2" y="620.2" text-anchor="end" font-family="Liberation Sans" font-size="10" textLength="31.8" lengthAdjust="spacingAndGlyphs" fill="#222">170 000</text><text x="146.2" y="638.2" text-anchor="end" font-family="Liberation Sans" font-size="10" textLength="31.8" lengthAdjust="spacingAndGlyphs" fill="#222">130 000</text><text x="146.2" y="657.2" text-anchor="end" font-family="Liberation Sans" font-size="10" textLength="27.3" lengthAdjust="spacingAndGlyphs" fill="#222">90 000</text><text x="146.2" y="675.2" text-anchor="end" font-family="Liberation Sans" font-size="10" textLength="27.3" lengthAdjust="spacingAndGlyphs" fill="#222">50 000</text><text x="146.2" y="694.2" text-anchor="end" font-family="Liberation Sans" font-size="10" textLength="27.3" lengthAdjust="spacingAndGlyphs" fill="#222">10 000</text><text x="146.2" y="712.2" text-anchor="end" font-family="Liberation Sans" font-size="10" textLength="30.6" lengthAdjust="spacingAndGlyphs" fill="#222">-30 000</text><text x="146.2" y="731.2" text-anchor="end" font-family="Liberation Sans" font-size="10" textLength="30.6" lengthAdjust="spacingAndGlyphs" fill="#222">-70 000</text><text x="146.2" y="749.2" text-anchor="end" font-family="Liberation Sans" font-size="10" textLength="35.2" lengthAdjust="spacingAndGlyphs" fill="#222">-110 000</text><text x="157.5" y="763" text-anchor="middle" font-family="Liberation Sans" font-size="10" textLength="26.4" lengthAdjust="spacingAndGlyphs" fill="#333">77 500</text><text x="202.5" y="763" text-anchor="middle" font-family="Liberation Sans" font-size="10" textLength="26.4" lengthAdjust="spacingAndGlyphs" fill="#333">87 500</text><text x="247.5" y="763" text-anchor="middle" font-family="Liberation Sans" font-size="10" textLength="26.4" lengthAdjust="spacingAndGlyphs" fill="#333">97 500</text><text x="292.5" y="763" text-anchor="middle" font-family="Liberation Sans" font-size="10" textLength="30.8" lengthAdjust="spacingAndGlyphs" fill="#333">107 500</text><text x="337.5" y="763" text-anchor="middle" font-family="Liberation Sans" font-size="10" textLength="30.8" lengthAdjust="spacingAndGlyphs" fill="#333">117 500</text><text x="383.5" y="763" text-anchor="middle" font-family="Liberation Sans" font-size="10" textLength="30.8" lengthAdjust="spacingAndGlyphs" fill="#333">127 500</text><text x="428.5" y="763" text-anchor="middle" font-family="Liberation Sans" font-size="10" textLength="30.8" lengthAdjust="spacingAndGlyphs" fill="#333">137 500</text><text x="473.5" y="763" text-anchor="middle" font-family="Liberation Sans" font-size="10" textLength="30.8" lengthAdjust="spacingAndGlyphs" fill="#333">147 500</text><text x="518.5" y="763" text-anchor="middle" font-family="Liberation Sans" font-size="10" textLength="30.8" lengthAdjust="spacingAndGlyphs" fill="#333">157 500</text><text x="563.5" y="763" text-anchor="middle" font-family="Liberation Sans" font-size="10" textLength="30.8" lengthAdjust="spacingAndGlyphs" fill="#333">167 500</text><path d="M148 487.5H157M148 506.5H157M148 524.5H157M148 543.5H157M148 561.5H157M148 580.5H157M148 598.5H157M148 617.5H157M148 635.5H157M148 654.5H157M148 672.5H157M148 691.5H157M148 709.5H157M148 728.5H157M148 746.5H157M157.5 744V754M202.5 744V754M247.5 744V754M292.5 744V754M337.5 744V754M383.5 744V754M428.5 744V754M473.5 744V754M518.5 744V754M563.5 744V754" stroke="#111" stroke-width="1.3"/><text x="145.5" y="465" font-family="Liberation Sans" font-size="11" fill="#222">P/L</text><text x="329.5" y="464" font-family="Liberation Sans" font-size="9.5" textLength="26.5" lengthAdjust="spacingAndGlyphs" fill="#222">117980</text><g clip-path="url(#cp)"><path d="M170 462 L306.7 683.8 L319.8 698 L590 698" fill="none" stroke="#3a5cf5" stroke-width="2.4" stroke-linejoin="round"/><path d="M188.2 462 L241.4 560 L285 640 C300.5 667.5 318 697.4 345 697.5 L590 697.5" fill="none" stroke="#f52020" stroke-width="1.3"/></g><path d="M340.5 468V749" stroke="#000" stroke-width="1.3"/></svg>
<div class="r" style="left:151px;top:777px;width:22px;height:22px;background:#d4d0c8;border:1px solid;border-color:#ececec #808080 #808080 #ececec;box-sizing:border-box;"></div>
<div class="r" style="left:177px;top:777px;width:22px;height:22px;background:#d4d0c8;border:1px solid;border-color:#ececec #808080 #808080 #ececec;box-sizing:border-box;"></div>
<div class="r" style="left:203px;top:777px;width:22px;height:22px;background:#d4d0c8;border:1px solid;border-color:#ececec #808080 #808080 #ececec;box-sizing:border-box;"></div>
<svg class="r" style="left:151px;top:777px" width="80" height="22" viewBox="0 0 80 22">
<g fill="none" stroke="#000"><circle cx="10.4" cy="10.2" r="4.8" stroke-width="1.15" fill="#fff"/><path d="M8 10.2h4.8M10.4 7.8v4.8" stroke-width="1.1"/><path d="M14 13.8 L17.6 17.4" stroke-width="2.3" stroke-linecap="round"/></g>
<g transform="translate(26,0)" fill="none" stroke="#000"><circle cx="10.4" cy="10.2" r="4.8" stroke-width="1.15" fill="#fff"/><path d="M8 10.2h4.8" stroke-width="1.1"/><path d="M14 13.8 L17.6 17.4" stroke-width="2.3" stroke-linecap="round"/></g>
<g transform="translate(52,0)" fill="none"><rect x="3.8" y="4.3" width="14.6" height="13.6" stroke="#222" stroke-width="1.1" stroke-dasharray="3 2"/><circle cx="10.8" cy="10.6" r="4.3" stroke="#777" stroke-width="1.1" fill="#d0d0d0"/><path d="M14 14 L17.4 17.4" stroke="#333" stroke-width="1.8" stroke-linecap="round"/></g>
</svg>
<div class="t" style="left:73.5px;top:838px;font:italic bold 11px 'Liberation Sans',sans-serif;color:#ff7a1a;">New!</div>
<div class="t" style="left:103px;top:841px;font: normal 12px 'Liberation Sans',sans-serif;color:#111;">Новый функционал позволяет вычислять гарантийное обеспечение для портфеля ("ГО для портфеля"). Расчет</div>
<div class="r" style="left:0px;top:848px;width:1248px;height:31px;background:#f0f0f0;border-top:1px solid #d6d6d6;box-sizing:border-box;"></div>
</body></html>
